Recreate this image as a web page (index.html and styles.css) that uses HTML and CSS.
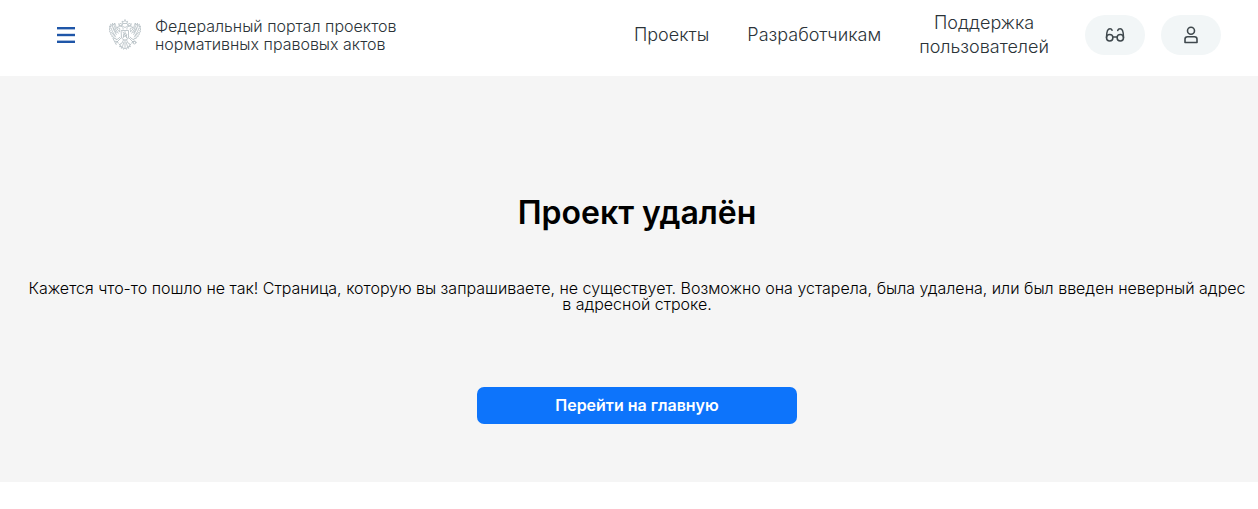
FILE: index.html
```
<!DOCTYPE html>
<html lang="ru">
<head>
  <meta charset="UTF-8" />
  <meta name="viewport" content="width=device-width, initial-scale=1.0" />
  <title>Проект удалён</title>
  <link rel="stylesheet" href="styles.css">
</head>
<body>

  <!-- Header -->
  <header class="header">
    <button class="menu-button" type="button" aria-label="Меню">
      <svg width="18" height="16" viewBox="0 0 18 16" fill="#1f56a8">
        <rect width="18" height="2.4" />
        <rect y="6.8" width="18" height="2.4" />
        <rect y="13.6" width="18" height="2.4" />
      </svg>
    </button>

    <a class="logo" href="#">
      <svg class="logo-icon" width="32" height="32" viewBox="0 0 32 32" fill="none" stroke="#b3bcc1" stroke-width="0.8" stroke-linecap="round" stroke-linejoin="round">
        <!-- crowns -->
        <path d="M14 4.5h4l.6-2.2-1.4.6L16 1.2l-1.2 1.7-1.4-.6zM16 1.2V.5" />
        <path d="M10.2 6.6l-.5-1.9 1.2.5.9-1 .7 1.1 1-.3-.5 1.8zM21.8 6.6l.5-1.9-1.2.5-.9-1-.7 1.1-1-.3.5 1.8z" />
        <!-- heads and necks -->
        <path d="M12.8 7c-1.3-.6-2.8-.2-3.4.8l-1.5.7 1.6.5c.8 0 1.4.3 1.4 1 0 .9-.8 1.4-.6 2.5M19.2 7c1.3-.6 2.8-.2 3.4.8l1.5.7-1.6.5c-.8 0-1.4.3-1.4 1 0 .9.8 1.4.6 2.5M12.8 7c1 .7 1.4 1.7 1.3 3.2M19.2 7c-1 .7-1.4 1.7-1.3 3.2M14.5 7.2l1.5 1.6 1.5-1.6" />
        <!-- left wing -->
        <path d="M10.3 12.5C8.5 11 7.2 9 6.6 6.5L5.7 4 5 6.3 3.5 4.2l-.1 2.6L1.6 5.2l.4 2.7L.5 7l.6 2.7-1 .1 1.2 2.3-.9.3 1.6 2-.7.6 1.9 1.5-.5.8 2.2 1-.2 1 2.1.3.2 1 1.9-.6 2-1.8" />
        <path d="M3.5 7l1.3 4 2.5 4.5M5.5 7l1.2 3.5 2.5 3.7M2 9l1.4 3.5L6.2 17M2.5 13.5l4 4.5M4.5 9l2.8 4.8" stroke-dasharray="1.4 .6" />
        <!-- right wing -->
        <path d="M21.7 12.5c1.8-1.5 3.1-3.5 3.7-6l.9-2.5.7 2.3 1.5-2.1.1 2.6 1.8-1.6-.4 2.7 1.5-.9-.6 2.7 1 .1-1.2 2.3.9.3-1.6 2 .7.6-1.9 1.5.5.8-2.2 1 .2 1-2.1.3-.2 1-1.9-.6-2-1.8" />
        <path d="M28.5 7l-1.3 4-2.5 4.5M26.5 7l-1.2 3.5-2.5 3.7M30 9l-1.4 3.5L25.8 17M29.5 13.5l-4 4.5M27.5 9l-2.8 4.8" stroke-dasharray="1.4 .6" />
        <!-- shield with the rider -->
        <path d="M12.5 11.5h7v7.2c0 1.2-1.6 1.5-3.5 2.5-1.9-1-3.5-1.3-3.5-2.5z" />
        <path d="M16 12.5v2l2 1-1 1.5 1 2M16 14.5l-2 1.5 1 1-1 2M14 13l4 6M14.5 17.5l3-1" />
        <!-- legs, orb and sceptre -->
        <path d="M12 19l-3.5 3.5-2.3-.2M8.5 22.5l-1.2 1.6M8.5 22.5l.7 1.7M4 19.5l3.2 6M20 19l3.5 3.5 2.3-.2M23.5 22.5l1.2 1.6M23.5 22.5l-.7 1.7" />
        <circle cx="25.5" cy="23.5" r="1.5" />
        <!-- tail -->
        <path d="M14.5 21l-1.5 3-2.8 1.6 1.5.3-1.2 1.8 2-.4-.2 2 1.7-1 .5 2 1.5-1.3 1.5 1.3.5-2 1.7 1-.2-2 2 .4-1.2-1.8 1.5-.3L19 24l-1.5-3M16 21.5v7M14.7 23.5l-1.2 4M17.3 23.5l1.2 4" />
      </svg>
      <span class="logo-text">Федеральный портал проектов<br>нормативных правовых актов</span>
    </a>

    <nav class="nav">
      <a href="#">Проекты</a>
      <a href="#">Разработчикам</a>
      <a href="#">Поддержка<br>пользователей</a>
    </nav>

    <div class="actions">
      <button class="round-button" type="button" aria-label="Версия для слабовидящих">
        <svg width="20" height="16" viewBox="0 0 20 16" fill="none" stroke="#3f484d" stroke-width="1.5" stroke-linecap="round" stroke-linejoin="round">
          <circle cx="4.7" cy="10.8" r="3.2" />
          <circle cx="15.3" cy="10.8" r="3.2" />
          <path d="M7.9 10h4.2M1.5 10.5C1.5 6.5 2.2 1.8 5 1.8c1.2 0 1.8.5 2.1 1.4M18.5 10.5C18.5 6.5 18 1.8 15.2 1.8c-1.3 0-2.2.6-2.5 1.7" />
        </svg>
      </button>
      <button class="round-button" type="button" aria-label="Войти">
        <svg width="16" height="18" viewBox="0 0 16 18" fill="none" stroke="#3f484d" stroke-width="1.6" stroke-linejoin="round">
          <circle cx="8" cy="4.8" r="3.5" />
          <path d="M4.5 10.8h7c1.5 0 2.5 1 2.5 2.5v3.2H2v-3.2c0-1.5 1-2.5 2.5-2.5z" />
        </svg>
      </button>
    </div>
  </header>

  <!-- Message -->
  <main class="content">
    <h1>Проект удалён</h1>
    <p>Кажется что-то пошло не так! Страница, которую вы запрашиваете, не существует. Возможно она устарела, была удалена, или был введен неверный адрес в адресной строке.</p>
    <button class="home-button" type="button">Перейти на главную</button>
  </main>

</body>
</html>
```

FILE: styles.css
```
* {
  box-sizing: border-box;
}
body {
  margin: 0;
  background: #fff;
  color: #000;
  font-family: Inter, "Liberation Sans", sans-serif;
  font-size: 16px;
  font-weight: 300;
}
button {
  border: none;
  font-family: inherit;
  cursor: pointer;
}
a {
  color: #2b3338;
  text-decoration: none;
}
.header {
  display: flex;
  align-items: center;
  min-height: 76px;
  padding: 0 37px 6px 57px;
}
.menu-button {
  display: flex;
  padding: 0;
  background: none;
}
.logo {
  display: flex;
  align-items: center;
  gap: 14px;
  margin-left: 34px;
}
.logo-icon {
  flex-shrink: 0;
}
.logo-text {
  line-height: 18px;
}
.nav {
  display: flex;
  align-items: center;
  gap: 38px;
  margin-left: auto;
  font-size: 18px;
  line-height: 24px;
  text-align: center;
}
.actions {
  display: flex;
  gap: 16px;
  margin-left: 36px;
}
.round-button {
  display: flex;
  align-items: center;
  justify-content: center;
  width: 60px;
  height: 40px;
  padding: 0;
  border-radius: 20px;
  background: #f2f6f7;
}
.content {
  display: flex;
  flex-direction: column;
  align-items: center;
  padding: 117px 8px 58px 24px;
  background: #f5f5f5;
  text-align: center;
}
.content h1 {
  margin: 0;
  font-size: 32px;
  font-weight: 600;
  line-height: 40px;
}
.content p {
  margin: 47px 0 75px;
  line-height: 16px;
}
.home-button {
  width: 320px;
  max-width: 100%;
  padding: 8px 16px;
  border-radius: 7px;
  background: #0d74fb;
  color: #fff;
  font-size: 16px;
  font-weight: 600;
  line-height: 21px;
}
```
